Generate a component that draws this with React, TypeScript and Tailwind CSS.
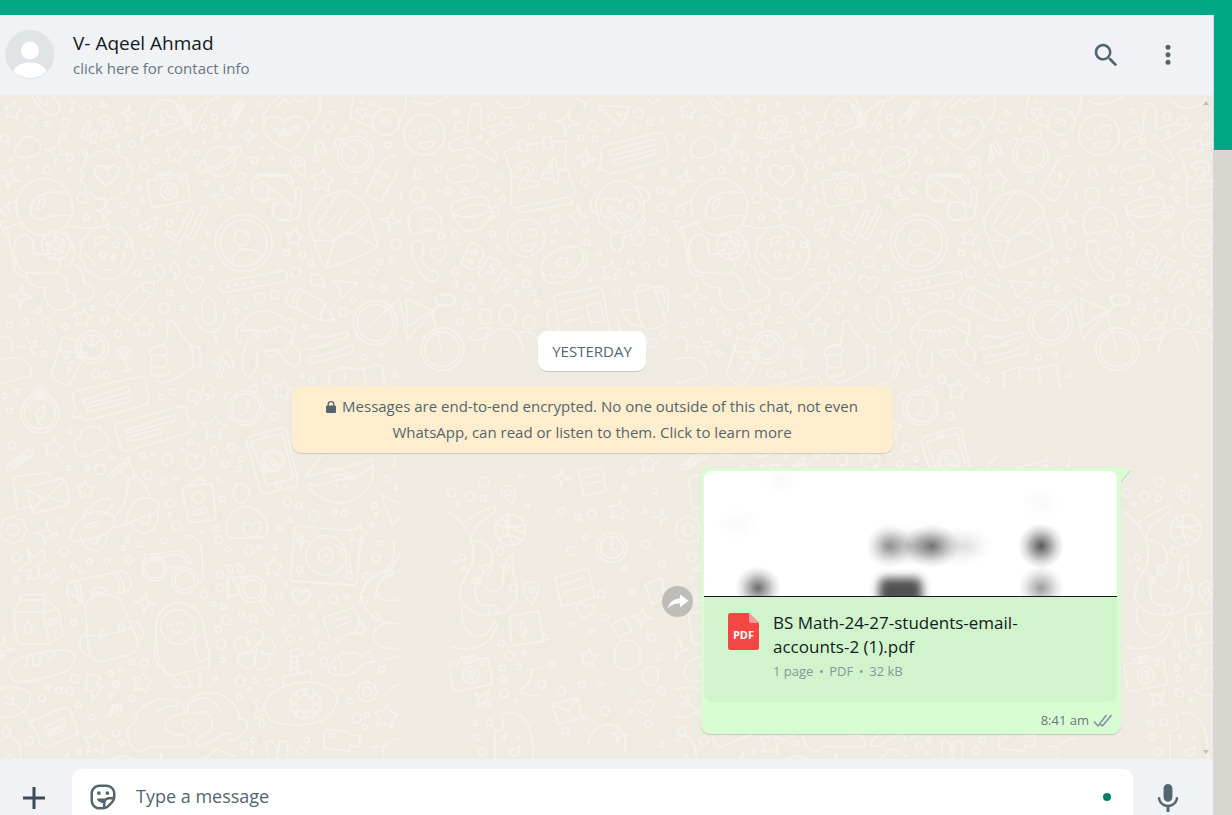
import React from "react";

type Dot = [number, number, number];
type Mark = [number, number, number, number];

const TILE_WIDTH = 2025;
const TILE_HEIGHT = 2100;

const dotsA: Dot[] = [
  [216, 30, 7], [214, 57, 4], [261, 52, 12], [309, 41, 7], [92, 89, 14], [139, 99, 6], [196, 95, 12], [187, 135, 8],
  [14, 143, 12], [385, 116, 8], [395, 160, 10], [354, 167, 5], [255, 189, 7], [209, 200, 10], [29, 203, 6], [83, 233, 6],
  [140, 237, 10], [207, 236, 5], [441, 176, 7], [433, 224, 12], [469, 210, 8], [591, 186, 8], [644, 79, 9], [612, 107, 7],
  [651, 134, 7], [649, 109, 3], [612, 151, 4], [694, 135, 4], [755, 89, 4], [779, 39, 8], [789, 169, 4], [763, 208, 9],
  [813, 201, 7], [723, 257, 12], [618, 276, 7], [713, 298, 8], [417, 290, 6], [427, 329, 6], [245, 321, 14], [373, 341, 8],
  [405, 363, 11], [259, 379, 8], [534, 354, 7], [509, 397, 9], [626, 427, 6], [612, 467, 6], [523, 482, 6], [445, 489, 14],
  [581, 512, 17], [633, 530, 7], [413, 545, 10], [510, 606, 7], [335, 624, 19], [491, 652, 15], [547, 651, 6], [278, 651, 7],
  [115, 658, 7], [317, 686, 10], [75, 693, 10], [28, 701, 8], [139, 694, 13], [156, 724, 10], [195, 707, 8], [353, 729, 10],
  [997, 67, 7], [984, 108, 15], [1035, 112, 6], [1165, 162, 9], [1065, 271, 7], [859, 486, 9], [907, 493, 9], [934, 517, 8],
  [887, 544, 15], [1070, 541, 8], [1119, 541, 12], [1139, 513, 8], [1176, 506, 7], [1187, 460, 15], [1113, 581, 7],
  [1149, 593, 8], [1059, 627, 8], [1030, 663, 13], [916, 709, 7], [694, 631, 9], [738, 649, 6], [707, 660, 8],
  [779, 621, 14], [823, 611, 12],
];

const dotsB: Dot[] = [
  [168, 62, 8], [178, 108, 15], [275, 77, 11], [427, 76, 9], [392, 106, 8], [241, 138, 6], [278, 125, 6], [202, 151, 7],
  [578, 104, 14], [542, 140, 8], [585, 143, 8], [621, 118, 7], [715, 68, 14], [704, 111, 8], [749, 94, 8], [787, 87, 6],
  [206, 199, 7], [115, 233, 10], [113, 296, 6], [144, 301, 10], [252, 282, 8], [299, 256, 8], [290, 295, 6], [309, 325, 8],
  [555, 271, 12], [720, 257, 8], [792, 241, 7], [781, 298, 10], [817, 306, 6], [783, 350, 12], [465, 384, 11], [470, 419, 5],
  [510, 430, 5], [458, 454, 5], [559, 417, 8], [562, 454, 9], [278, 429, 9], [295, 466, 6], [124, 436, 9], [166, 430, 9],
  [174, 458, 6], [762, 421, 10], [801, 443, 7], [597, 487, 7], [693, 512, 8], [738, 525, 11], [789, 510, 14], [699, 549, 6],
  [569, 565, 6], [359, 525, 7], [382, 541, 9], [379, 579, 12], [350, 606, 7], [401, 605, 7], [413, 637, 8], [242, 627, 7],
  [198, 648, 10], [181, 692, 10], [166, 577, 8], [165, 542, 10], [209, 589, 13], [650, 606, 10], [790, 729, 10], [755, 756, 14],
];

const dotsC: Dot[] = [
  [133, 38, 8], [287, 98, 12], [320, 101, 10], [14, 166, 8], [53, 151, 7], [28, 208, 8], [210, 270, 7], [35, 312, 10],
  [336, 348, 6], [209, 380, 7], [262, 381, 7], [300, 385, 16], [443, 402, 13], [428, 344, 8], [460, 341, 4], [502, 356, 16],
  [545, 327, 6], [571, 303, 8], [598, 312, 3], [642, 329, 11], [695, 320, 12], [676, 369, 10], [715, 385, 7], [723, 354, 7],
  [485, 169, 7], [519, 154, 10], [527, 411, 7], [490, 423, 7], [656, 412, 6], [666, 474, 7], [510, 487, 12], [509, 520, 5],
  [530, 555, 14], [607, 573, 5], [646, 563, 8], [657, 596, 11], [181, 537, 8], [192, 631, 14], [383, 596, 7], [418, 611, 8],
  [491, 599, 9], [369, 622, 7], [386, 656, 11], [321, 659, 8], [268, 662, 8], [244, 691, 6], [220, 676, 7], [50, 649, 13],
  [48, 715, 7], [683, 625, 8], [747, 630, 13], [778, 619, 6], [825, 618, 7], [839, 564, 7], [871, 537, 7], [862, 482, 12],
  [897, 494, 9], [942, 526, 15], [1003, 514, 8], [1033, 517, 9], [1122, 494, 8], [1129, 521, 5], [1116, 552, 6],
  [1161, 414, 10], [1187, 440, 5], [1142, 606, 8], [1129, 652, 11], [856, 731, 7], [801, 115, 12], [824, 226, 11],
  [907, 103, 6], [935, 117, 8], [1092, 49, 8], [1142, 41, 7], [1184, 99, 7],
];

const dotsD: Dot[] = [
  [222, 184, 8], [397, 304, 8], [433, 306, 12], [364, 326, 7], [332, 337, 7], [348, 369, 9], [223, 353, 12], [145, 381, 6],
  [176, 388, 9], [209, 390, 11], [127, 412, 10], [235, 432, 8], [332, 404, 7], [397, 411, 9], [277, 468, 8], [348, 516, 10],
  [365, 546, 7], [87, 539, 12], [237, 574, 7], [612, 102, 10], [641, 129, 7], [671, 136, 8], [679, 177, 14], [725, 159, 7],
  [760, 173, 10], [655, 205, 9], [663, 250, 14], [668, 298, 7], [646, 353, 6], [721, 360, 15], [762, 359, 8], [810, 364, 12],
  [750, 386, 6], [718, 410, 8], [837, 108, 10], [882, 176, 14], [932, 165, 7], [853, 206, 7], [870, 234, 11], [904, 233, 3],
  [947, 207, 7], [968, 255, 12], [935, 279, 7], [971, 300, 10], [961, 129, 7], [998, 115, 14], [1042, 107, 7],
  [1145, 325, 9], [1026, 386, 6], [1050, 419, 8], [1070, 471, 14], [1101, 461, 7], [1094, 497, 7], [921, 536, 8],
  [903, 570, 11], [760, 537, 8], [733, 556, 9], [757, 573, 5],
];

const dotsE: Dot[] = [
  [658, 63, 14], [614, 106, 14], [560, 95, 12], [655, 112, 9], [581, 128, 6], [705, 270, 12], [767, 44, 6], [788, 135, 6],
  [709, 547, 9], [776, 575, 6], [732, 584, 13], [711, 620, 8], [762, 617, 7], [716, 653, 8], [718, 696, 12], [752, 719, 5],
  [630, 785, 7], [673, 785, 10], [636, 829, 10], [653, 872, 11], [592, 290, 9], [572, 303, 5], [597, 321, 5],
];

const dotsF: Dot[] = [
  [350, 180, 10], [380, 300, 14], [420, 260, 7], [470, 430, 12], [540, 350, 8], [600, 280, 12], [630, 120, 8],
  [410, 700, 9], [480, 780, 13], [560, 720, 8], [610, 820, 11], [640, 620, 7], [300, 560, 8], [360, 840, 10],
  [560, 60, 10], [540, 110, 7], [600, 180, 6], [400, 200, 8], [440, 190, 12], [650, 340, 10], [560, 420, 7],
  [480, 500, 10], [440, 540, 6], [620, 560, 12], [380, 520, 7], [350, 720, 12], [560, 780, 6], [650, 720, 12],
  [420, 800, 7], [650, 880, 8], [320, 640, 9], [470, 700, 6], [290, 700, 12],
];

function starPath(points: number, radius: number, inner: number) {
  const out: string[] = [];
  for (let i = 0; i < points * 2; i++) {
    const r = i % 2 === 0 ? radius : radius * inner;
    const a = (Math.PI * i) / points - Math.PI / 2;
    out.push(`${(r * Math.cos(a)).toFixed(1)} ${(r * Math.sin(a)).toFixed(1)}`);
  }
  return `M${out.join("L")}Z`;
}

function Dots({ items }: { items: Dot[] }) {
  return (
    <>
      {items.map(([x, y, r]) => (
        <circle key={`${x}-${y}`} cx={x} cy={y} r={r} />
      ))}
    </>
  );
}

function Stars({ items }: { items: Mark[] }) {
  return (
    <>
      {items.map(([x, y, r, a]) => (
        <path key={`${x}-${y}`} d={starPath(5, r, 0.52)} transform={`translate(${x} ${y}) rotate(${a})`} />
      ))}
    </>
  );
}

function Sparkles({ items }: { items: Mark[] }) {
  return (
    <>
      {items.map(([x, y, r, a]) => (
        <path key={`${x}-${y}`} d={starPath(4, r, 0.3)} transform={`translate(${x} ${y}) rotate(${a})`} />
      ))}
    </>
  );
}

const HEART = "M0 26C-22 10-30 0-29-11C-27-25-8-28 0-13C8-28 27-25 29-11C30 0 22 10 0 26Z";

function Hearts({ items }: { items: Mark[] }) {
  return (
    <>
      {items.map(([x, y, s, a]) => (
        <path key={`${x}-${y}`} d={HEART} transform={`translate(${x} ${y}) rotate(${a}) scale(${s})`} />
      ))}
    </>
  );
}

function HeartEyes({ x, y, r }: { x: number; y: number; r: number }) {
  return (
    <g transform={`translate(${x} ${y}) scale(${r / 60})`}>
      <circle r="60" />
      <path d={HEART} transform="translate(-28 -2) rotate(-8) scale(.62)" />
      <path d={HEART} transform="translate(20 -14) rotate(-8) scale(.62)" />
      <path d="M-18 24Q6 26 30 17Q28 38 8 42Q-14 42-18 24Z" />
    </g>
  );
}

function Camera({ x, y }: { x: number; y: number }) {
  return (
    <g transform={`translate(${x} ${y}) rotate(-11)`}>
      <path d="M-56-40h28l8-14h38l8 14h28q6 0 6 8v64q0 10-8 10h-100q-12 0-12-10v-62q0-10 4-10z" />
      <circle r="25" cy="2" /><circle r="12" cy="2" /><circle r="3" cy="2" />
      <rect x="-14" y="-46" width="28" height="11" rx="5" /><circle cx="42" cy="-26" r="7" />
    </g>
  );
}

function DoodleBackground() {
  return (
    <svg className="absolute inset-0 h-full w-full" aria-hidden="true">
      <defs>
        <pattern id="doodles" width={TILE_WIDTH / 3} height={TILE_HEIGHT / 3} patternUnits="userSpaceOnUse">
          <g transform="scale(.33333)" fill="none" stroke="#f5f2eb" strokeWidth="5.500" strokeLinejoin="round" strokeLinecap="round">
            <g transform="translate(0 -15)">
              <Dots items={dotsA} />
              <Stars items={[[39, 60, 28, 8], [527, 188, 34, 10], [967, 270, 36, 6], [883, 440, 27, 10], [248, 681, 30, 8], [432, 711, 32, 0]]} />
              <Sparkles items={[[385, 68, 23, 6], [746, 135, 26, 0], [171, 181, 37, 10], [28, 263, 31, 14], [664, 318, 37, 8], [314, 361, 25, 6], [63, 617, 36, 5], [1172, 388, 31, 8]]} />
              <Hearts items={[[320, 252, 1.25, 0], [579, 579, 1, 8]]} />
              <path d="M96 15Q105 40 144 70Q166 78 178 60Q184 38 157 15M110 18L134 42Q146 44 142 30" />
              <path d="M48 192Q38 168 60 156Q66 134 88 138Q100 136 108 146Q130 154 120 180Q114 196 92 196Q66 208 48 192Z" />
              <path d="M260 92L242 138L276 144L272 154L286 156L291 126L278 124L276 134L258 130L274 96ZM295 88Q304 68 326 76Q346 86 334 108L318 124L350 124L352 134L302 146Q298 130 318 112Q328 98 324 90Q314 84 308 96Z" />
              <path d="M420 96L446 92Q452 40 486 25L525 32Q560 60 556 104L520 118Q490 138 470 132L474 118Q440 120 424 152Q424 130 436 106ZM482 62Q502 50 500 74L530 84Q536 98 512 100L486 102Q476 98 492 86L480 76ZM525 32L556 104L566 100Q560 56 538 18" />
              <path d="M572 66L620 30Q634 30 624 42L584 122Q572 128 572 112ZM632 28L655 17" />
              <path d="M674 92L704 46M690 104Q670 108 674 88M694 104L738 38M704 46Q716 24 734 30M700 84L730 36M694 76L722 32" />
              <path d="M790 100Q794 76 824 76Q846 78 854 98Q866 74 900 76Q926 84 924 116Q914 150 868 180Q812 156 790 120ZM790 86Q796 46 826 28L840 16M830 48Q846 30 858 24L862 40L886 22L894 34L924 18M958 18Q970 68 928 108M820 112L834 112L840 132L852 114L862 132L878 110L892 104L896 112L866 136L852 126L840 140Z" />
              <path d="M1062 18Q1050 60 1054 82L1120 110M1072 52L1086 58L1098 50L1096 66L1110 74L1092 76L1086 86L1080 70L1070 66ZM1080 30L1090 36M1108 36L1120 42M1134 42L1150 56" />
              <circle cx="1158" cy="92" r="40" /><path d="M1144 82L1174 92M1144 92L1170 102" />
              <circle cx="1066" cy="190" r="53" /><circle cx="1066" cy="190" r="42" /><path d="M1056 168L1068 188L1056 210M1076 130Q1080 116 1098 122Q1104 132 1094 140M1006 166Q1000 146 1018 142Q1028 142 1028 148" />
              <path d="M944 160L964 148L980 188Q974 196 966 188L956 164L948 166L956 204Q948 216 940 206L946 198Z" />
              <path d="M914 258Q874 228 872 214Q876 196 894 198Q914 200 914 220Z" /><circle cx="893" cy="218" r="9" />
              <path d="M1098 300L1148 212Q1160 192 1186 196M1098 300Q1116 330 1144 330L1196 238M1128 234Q1150 254 1170 260M1118 266Q1136 284 1158 288M1150 250L1160 248L1154 264Z" />
              <path d={starPath(14, 80, 0.88)} transform="translate(320 252)" />
              <circle cx="661" cy="212" r="45" /><path d="M614 206Q590 222 592 238Q598 250 626 242Q690 224 722 188Q726 166 708 166Q686 170 688 178Q704 172 708 184Q670 222 606 238" />
              <Camera x={506} y={298} />
              <path d="M762 260Q748 290 758 310Q770 332 798 334Q808 320 824 326Q808 372 828 380Q850 398 894 380L900 364Q906 330 904 296Q898 284 886 294Q890 330 886 350L830 304L762 254L860 258Q860 278 878 280Q886 270 866 252L778 250" />
              <circle cx="784" cy="302" r="26" /><circle cx="846" cy="360" r="28" />
              <path d="M416 406L470 378Q474 376 472 384L452 438L436 424L452 404L426 420Z" />
              <path d="M494 430L540 458L582 364Q578 354 568 360L532 434L502 418ZM556 436L578 448L622 356Q622 346 610 348L570 430Z" />
              <circle cx="731" cy="456" r="85" /><circle cx="731" cy="456" r="70" /><circle cx="725" cy="441" r="23" /><path d="M696 506Q706 474 736 474Q776 476 788 494" />
              <path d="M928 380L970 318Q996 304 1030 298Q1070 310 1102 350L1134 462Q1120 486 978 532Q950 486 940 440Q922 404 928 380ZM940 448L1004 450L1102 372M948 410L1000 330Q1008 306 1026 304M948 410L1004 446L1030 428L1060 426L1134 470M1004 446L978 530M1066 426L1106 382M988 396L1006 376M1006 408L1046 352" />
              <circle cx="133" cy="348" r="85" /><path d="M96 378Q82 346 112 320Q144 296 200 304M96 378Q120 392 148 378Q180 368 214 376M112 352Q114 326 136 320Q140 334 120 356Z" />
              <path d="M48 330Q8 336-4 374Q-2 410 22 436M20 344L28 360M4 366L20 374M0 394L18 392M8 418L20 408M22 408L70 392M22 408L44 538Q54 560 78 554M72 430Q38 440 42 480Q52 542 78 544L160 548Q188 532 178 512Q170 506 160 500L170 488L102 490Q102 432 72 430ZM196 402L256 412L310 406M192 420Q230 470 222 500L206 526M78 548Q84 592 134 590Q130 644 172 658Q230 652 224 622Q216 596 190 600M170 544Q208 560 204 604M222 520Q248 530 254 578Q290 586 280 616Q270 630 228 632" />
              <circle cx="167" cy="463" r="42" /><circle cx="167" cy="463" r="13" />
              <Dots items={[[167, 439, 4], [189, 448, 4], [191, 463, 4], [186, 482, 4], [144, 478, 4], [144, 460, 4]]} />
              <path d={starPath(11, 84, 0.93)} transform="translate(322 484)" />
              <path d="M286 446Q300 432 322 440Q310 452 286 464ZM254 486Q270 500 286 522M320 410L340 428M366 486Q382 494 362 516M310 538L334 536M336 496L346 490L342 510Z" /><Dots items={[[348, 461, 9], [308, 493, 9], [386, 462, 8]]} />
              <path d="M462 540Q458 520 478 520Q496 528 494 546Q490 566 474 570Q482 556 480 548Q466 552 462 540ZM510 534Q510 514 528 516Q542 528 538 546Q532 562 520 566Q528 550 524 544Q510 546 510 534Z" />
              <path d="M350 652L424 578L462 572L462 604L384 688Q360 684 350 652ZM424 578Q426 602 456 608M364 640Q372 664 396 674" />
              <path d="M664 574L846 540Q864 544 862 560Q860 572 842 574L680 604Q656 602 656 588Q656 578 664 574Z" /><Dots items={[[683, 586, 4], [708, 580, 4], [733, 577, 4], [758, 573, 4]]} />
              <path d="M932 572Q926 548 948 548Q970 554 974 590Q958 576 940 584ZM1000 568L1074 576L1028 618Q1020 618 1022 598Z" />
              <path d="M864 614Q872 586 896 592L964 628L1004 686L960 688L884 650Q852 640 856 626ZM896 596Q876 612 880 636M908 600Q886 624 892 650M976 640Q960 660 962 684" />
              <path d="M606 640Q610 616 628 618Q642 622 646 644L650 676Q648 698 630 700Q610 696 606 676ZM588 680Q594 720 634 724Q676 714 672 666M640 724L650 756" />
              <path d="M732 690Q752 660 796 658Q836 660 854 690Q888 672 884 720L878 738Q880 766 856 778M732 694Q706 706 708 740Q716 756 722 760M732 694Q720 730 740 716L792 722L840 706L878 730M758 740L768 716M770 742L778 722M800 736L796 718M814 732L808 716M832 726L820 712" />
              <circle cx="1126" cy="695" r="66" /><circle cx="1126" cy="695" r="54" /><path d="M1124 692L1200 620" />
              <path d="M916 754Q928 726 956 738L980 740L1040 722Q1048 730 1040 738L988 756L966 770M452 776Q470 760 494 762Q506 726 504 696Q516 682 526 700Q540 732 572 760L600 772M180 778L186 738L240 752" />
              <circle cx="277" cy="768" r="48" /><circle cx="277" cy="768" r="36" /><path d="M277 768L277 736M277 768L250 744M277 768L304 744" />
              <path d="M0 740Q34 728 38 760L34 780M78 736L86 756L108 750L110 764L90 770L102 790M54 766L74 768" />
            </g>

            <g transform="translate(1200 -15)">
              <Dots items={dotsB} />
              <Stars items={[[632, 542, 31, 8]]} />
              <Sparkles items={[[501, 95, 38, 8], [556, 203, 32, 8], [532, 377, 34, 4]]} />
              <Hearts items={[[86, 400, 0.75, -6], [117, 491, 0.85, -10]]} />
              <HeartEyes x={73} y={131} r={61} /><HeartEyes x={378} y={441} r={56} />
              <path d="M0 90Q20 50 18 16M40 30Q84 54 142 18M292 30Q306 56 350 50Q390 42 390 20M532 24L556 34L552 52L574 22M742 24Q758 50 776 20" />
              <path d="M218 38Q240 36 244 60L244 116L306 96Q308 76 330 78Q338 88 332 100Q350 96 348 106L256 152L290 190Q298 210 286 212L210 170Q156 186 148 174Q142 154 172 142L202 134Q206 60 218 38ZM304 100L330 104" />
              <path d="M138 250Q140 230 168 232Q184 216 208 226Q232 220 236 246Q230 266 204 268L158 278Q140 270 138 250ZM44 228Q68 240 66 256Q56 270 42 256ZM196 286Q212 304 204 312Q192 314 190 300Z" />
              <path d="M312 182L350 170M384 162L426 154M460 152L498 152L496 220Q512 272 526 298Q522 316 510 318L518 336L362 366L348 350L510 318M350 350L334 346L334 250Q324 210 312 182M354 150L376 146L384 178L360 184ZM428 140L452 136L458 168L434 176ZM334 262L352 258M478 240L498 234M350 228Q362 206 388 212Q414 222 394 248L376 272L414 270L416 284L356 296Q354 274 386 244Q390 232 380 228Q368 226 364 238ZM446 212L424 262L462 264L462 278L474 276L476 256L466 204L456 206L456 246L438 248L454 216Z" />
              <path d="M598 50Q596 42 608 44L688 48L666 102Q660 110 652 100ZM646 62L682 76L672 88Z" />
              <path d="M602 182Q604 168 616 162L780 124Q792 124 794 134L806 190Q804 204 792 208L626 250L612 236L594 238L606 212ZM628 180L760 146Q774 148 766 160L636 194Q624 190 628 180ZM638 208L764 176Q774 182 764 190L648 220Q634 216 638 208Z" />
              <path d="M32 316Q32 290 52 290Q74 296 74 320Q68 336 54 336Q34 332 32 316ZM26 410Q18 366 54 350Q98 342 122 380Q132 412 118 418Q74 420 36 430ZM0 300Q12 316 0 326" />
              <path d="M152 350Q156 332 188 326Q250 308 262 324Q276 350 252 368Q206 386 166 372Q150 364 152 350ZM166 364Q210 334 254 342M156 372L190 416Q218 426 248 408L268 378M264 352L290 346Q300 356 294 372L262 388M268 366Q284 354 282 372L266 378" />
              <ellipse cx="660" cy="348" rx="72" ry="78" /><circle cx="632" cy="354" r="8" /><circle cx="692" cy="346" r="8" />
              <path d="M606 368Q592 330 622 324Q650 318 660 334Q680 304 710 320Q730 340 716 364L690 380M606 368Q620 388 636 380Q644 366 662 364L716 402M590 306Q564 322 574 354Q582 368 592 362M710 286Q746 292 748 320Q744 334 730 332M650 378L668 404M662 372L684 396M618 392L636 432Q620 462 650 482Q676 472 668 440L692 430Q700 470 722 464Q744 440 716 422L738 380" />
              <path d="M34 458Q54 440 68 454L72 484L60 502L92 538L112 544Q122 562 104 570Q78 572 60 544Q30 500 34 458Z" />
              <path d="M214 454L182 516L210 534Q244 538 238 510Q262 488 240 466ZM216 478Q234 478 228 490L212 488ZM204 504Q220 508 214 520L200 512ZM266 496L234 550L250 562L262 540L276 546L282 534L270 528L276 518L294 528L302 514ZM310 536L276 594L292 606L304 584L320 590L326 578L312 570L318 560L338 570L346 554Z" />
              <path d="M424 534Q424 510 446 492Q490 462 530 468Q570 486 562 512Q548 548 498 570Q456 584 440 570Q426 556 424 534ZM424 534Q432 566 452 548Q464 566 476 548Q492 572 504 548Q530 548 540 520Q556 510 546 482M470 518Q476 498 500 500Q508 512 490 524Q474 532 470 518Z" />
              <path d="M462 624Q456 618 470 612L598 588Q608 590 610 604L630 730M462 624L478 720M458 654Q436 664 442 684L452 722M474 634L596 608M484 664L542 652M492 692L550 680M558 644L600 632L612 690L574 696ZM652 684Q664 706 656 720" />
              <path d="M702 604L722 582L744 580L760 590L800 690Q804 704 742 716L724 702L702 604L760 590M760 590Q790 574 806 610L804 664M770 604Q794 584 794 640M722 660L664 656Q680 706 728 706" />
              <path d="M0 562L42 578L20 600L0 580M18 622L98 658L24 708ZM0 630L22 740M104 620L120 612Q166 606 166 634Q150 646 120 640L96 668L126 776M22 744L96 664M118 646L104 618" />
              <circle cx="127" cy="775" r="64" /><circle cx="127" cy="775" r="52" />
              <ellipse cx="257" cy="678" rx="18" ry="22" /><ellipse cx="322" cy="672" rx="25" ry="30" /><ellipse cx="386" cy="694" rx="18" ry="21" />
              <path d="M208 748Q220 706 272 710L252 744ZM252 780Q256 716 310 712Q360 712 370 780M360 724Q406 720 416 750" />
            </g>

            <g transform="translate(0 735)">
              <Dots items={dotsC} />
              <Stars items={[[159, 322, 30, 10], [643, 262, 38, 6], [847, 148, 32, 10], [256, 447, 29, 0], [1074, 580, 30, 10], [820, 680, 29, 5]]} />
              <Sparkles items={[[138, 577, 36, 5], [158, 706, 26, 8], [904, 600, 20, 0]]} />
              <Hearts items={[[585, 364, 1, 10], [757, 567, 1, -6], [903, 765, 0.9, 5]]} />
              <path d="M180 10L154 104Q176 130 206 134Q224 110 250 48M178 32L262 34M-4 60Q40 40 74 60Q96 76 96 104L0 128" />
              <Dots items={[[200, 48, 5], [237, 47, 5], [218, 66, 5], [207, 84, 5], [371, 36, 19], [371, 36, 9]]} />
              <path d="M376 56L384 90M370 92L396 84M448 36Q452 14 480 14L500 18Q512 40 488 42L464 42Q446 50 448 36ZM458 44Q444 80 470 80L494 78Q508 60 492 44M454 84Q448 104 470 106Q510 108 506 88M470 108Q472 128 494 124Q542 110 576 82M572 14Q586 50 578 78L600 76Q602 50 598 18M636 66L684 30L702 76Q694 86 686 76L676 60L664 106Q650 110 654 98L668 52L646 74Z" />
              <path d="M728 40L744 0M728 40Q722 96 746 108Q776 96 770 30M834 26Q848 62 884 76Q908 70 898 30L868 0M792 30Q796 50 820 46Q834 38 828 26Z" />
              <path d="M924 60Q930 40 960 44L1024 26L1040 14Q1060 12 1058 26Q1050 44 1030 42L934 68ZM916 20Q930 30 950 18L1000 10M990 102Q976 96 990 92L1030 78L1070 86L1138 72Q1146 72 1146 84L1158 140M990 102L984 140M1032 82L1036 118M1092 84L1096 128" />
              <circle cx="120" cy="218" r="57" /><circle cx="120" cy="218" r="46" /><circle cx="121" cy="151" r="17" /><circle cx="121" cy="151" r="7" /><path d="M108 214L132 192L134 220L114 246ZM84 200L92 206M122 262L124 252M164 220L154 218" />
              <path d="M218 172Q216 156 230 150L420 106Q434 106 438 120L448 176Q444 190 430 194L258 240L242 226L214 232L226 206ZM248 178L380 136Q398 140 388 152L266 188Q244 190 248 178ZM262 200L386 168Q396 174 384 184L278 210Q256 210 262 200Z" />
              <path d="M344 264Q342 252 358 246L540 196Q556 194 560 208L566 238L586 250L568 262L572 274L384 328Q366 330 362 318ZM376 268L520 222Q536 228 524 238L388 274Q370 278 376 268ZM382 290L480 262Q492 266 482 278L398 300Q382 300 382 290Z" />
              <path d="M226 330Q216 298 242 288Q242 256 274 258Q298 250 306 272Q330 280 326 304Q316 330 288 328Q276 352 246 346Z" />
              <path d="M566 172Q558 150 580 148Q602 154 602 172Q598 186 586 194Q592 182 586 178Q572 184 566 172ZM606 150Q604 128 624 128Q646 136 642 156Q634 174 622 176Q630 164 624 160Q608 162 606 150Z" />
              <circle cx="737" cy="200" r="52" /><circle cx="737" cy="200" r="42" /><path d="M736 172L746 190L738 214L722 222M750 142Q754 130 772 134Q776 144 766 150M674 176Q668 156 690 154" />
              <path d="M740 306Q738 292 752 286L844 260Q856 260 860 272L894 420Q892 434 882 438L796 458Q784 458 780 444ZM754 302L848 278L880 412L800 432ZM786 286L806 282" />
              <circle cx="820" cy="360" r="33" /><circle cx="820" cy="360" r="25" /><path d="M808 346Q806 372 832 374L834 364L822 362L816 350ZM792 386L790 394L804 390" /><circle cx="836" cy="432" r="8" />
              <path d="M20 374L84 326Q100 326 96 344L36 388Q20 390 20 374ZM28 376L80 342M38 380L84 348" />
              <path d="M52 506L40 416Q40 408 50 406L142 394Q150 396 152 412M80 446Q78 438 88 436L184 412Q196 414 198 424L208 478Q204 490 196 494L110 516Q98 516 96 506ZM82 446L136 476L192 420M98 508L130 472M148 470L206 486M52 506L94 496" />
              <path d="M324 406L386 348Q394 356 382 370L332 412ZM366 376Q384 356 400 384Q408 410 390 418L362 392ZM384 418Q388 490 340 528M400 398Q434 420 452 470M250 522Q296 466 330 472Q350 490 310 524M210 580Q230 530 280 512Q346 510 344 544Q336 574 296 588L230 602Q206 602 210 580ZM254 554L294 542Q302 548 290 554L262 562ZM376 552Q384 490 424 470Q474 470 478 494Q474 518 450 520Q394 540 376 552L338 560" />
              <path d="M242 588Q254 634 296 628Q322 612 320 580M258 596Q270 612 286 606Q298 602 298 590M394 546Q408 580 440 576Q478 566 474 516M418 532Q424 552 440 550Q452 540 448 524" />
              <path d="M548 448Q546 440 558 436L630 428Q636 430 638 440L648 524Q646 534 636 536L576 546Q566 544 564 536ZM552 440L600 412L614 420L616 430M582 510L616 500Q626 504 618 514L590 522Q580 520 582 510Z" /><circle cx="594" cy="470" r="18" />
              <path d="M700 456Q704 426 722 426Q748 432 748 460Q740 486 722 488Q704 484 700 456ZM680 580Q674 516 722 500Q776 490 802 548Q806 578 790 588L688 592Z" />
              <path d="M916 408L966 342M916 408L1116 358L1116 342M928 428Q960 440 1000 420L1060 408Q1098 398 1118 370Q1124 400 1110 430Q1080 484 1010 486Q940 468 928 440ZM984 382Q1020 378 1054 402M994 410L1020 400L1068 418M1006 428L1012 440M1036 430L1040 440M1180 380L1186 344" />
              <path d={starPath(8, 43, 0.83)} transform="translate(39 567)" /><circle cx="39" cy="567" r="17" />
              <path d="M84 626L100 652L130 624L138 660L112 672L118 708L84 716L94 688L56 688L90 660Z" />
              <path d="M554 586Q566 576 586 592Q610 612 606 640L608 718Q600 730 590 720M434 640Q480 640 530 628Q556 628 574 662Q574 670 564 666Q546 638 528 640L448 658Q424 664 428 686L434 640M500 676Q512 672 524 682" />
              <circle cx="464" cy="684" r="36" /><circle cx="464" cy="684" r="28" /><circle cx="554" cy="718" r="39" /><circle cx="554" cy="718" r="29" />
              <path d="M650 694Q664 686 672 704Q670 716 658 712Q646 704 650 694ZM678 674Q692 664 698 684Q700 700 688 696ZM708 670Q726 668 732 690Q722 702 712 690ZM648 740Q650 724 664 730Q676 744 668 752Q652 756 648 740ZM680 722Q686 706 704 710L736 706M680 722L686 776" />
              <circle cx="757" cy="745" r="40" /><circle cx="757" cy="745" r="28" />
              <path d="M884 560Q886 556 898 556L1048 568M1082 594L1070 724Q1066 734 1056 732L878 720Q870 716 872 706L884 560M1008 614L1048 640L1054 700M1016 632L1040 648L1040 700" /><circle cx="978" cy="643" r="60" /><circle cx="978" cy="643" r="22" /><circle cx="978" cy="643" r="5" /><circle cx="1047" cy="705" r="10" /><circle cx="898" cy="685" r="9" />
              <path d="M1180 600Q1190 660 1150 690Q1080 730 1082 780M1200 636Q1186 670 1150 708Q1124 740 1128 780M1144 462L1200 488M1144 462L1176 552L1200 530" />
            </g>

            <g transform="translate(0 1395)">
              <Dots items={dotsD} />
              <Stars items={[[426, 366, 32, 10], [288, 545, 39, 6], [1158, 467, 38, 8]]} />
              <Sparkles items={[[435, 125, 32, 6], [10, 262, 32, 8], [484, 600, 22, 0]]} />
              <Hearts items={[[570, 496, 0.7, 0], [903, 110, 0.95, 4]]} />
              <path d="M200 84Q198 68 212 62L366 30Q386 34 394 66Q390 90 374 92L352 98M250 128L222 138Q206 130 200 84ZM224 64L240 130M234 60L250 124M340 38Q360 60 362 96M350 34Q370 58 374 92" />
              <path d="M40 154L64 104Q66 98 134 100L136 116L174 144L190 222L148 250L62 248Q52 246 50 232ZM40 154L130 154L174 144M130 154L148 250M130 154L136 116M60 118L136 116M84 180Q100 204 96 214Q86 224 76 210Q72 200 84 180ZM144 186Q148 172 170 172Q172 184 148 192Z" />
              <path d="M256 138Q262 106 300 102Q348 100 362 120L410 230Q424 268 384 282L310 300Q276 306 264 258ZM256 220Q306 236 408 194M276 100Q278 74 298 78Q322 82 322 100M286 102Q296 82 310 100M260 222Q238 216 240 250Q246 282 266 284M396 182Q418 176 430 214Q426 240 414 240M298 208L312 206L314 226L300 230ZM354 192L368 190L372 210L358 214Z" />
              <path d="M28 330Q32 294 86 284Q200 252 222 280Q232 306 196 332Q100 364 50 362Q26 352 28 330ZM74 318L86 282L98 280L100 312L118 312L122 276L132 276L148 290M148 306L160 274Q170 266 164 284" />
              <path d="M264 338L300 346L290 372L308 378L278 420L276 392L256 386ZM0 384Q60 370 90 396Q94 440 68 454L84 466M66 452Q26 480 0 464M18 402L62 446M14 426L44 430M38 400L40 422" />
              <path d="M84 484L188 440Q206 438 212 450L236 518L134 560L118 546L110 510ZM132 500L186 474Q198 478 190 488L144 510ZM140 520L190 496Q198 500 188 508L152 524Z" />
              <path d="M338 432L368 434L358 462Q346 470 346 458L354 442L338 440L334 462Q324 472 316 462L328 456Z" />
              <path d="M476 290Q460 200 474 168Q494 124 538 126Q590 130 606 174L630 290L624 320L512 344Q486 330 476 290ZM598 224Q580 226 582 248L598 302L628 290M474 244Q456 250 466 296L484 322L494 318M522 348L540 372L524 378L600 376L600 336M560 340L572 374" />
              <circle cx="533" cy="198" r="51" /><path d="M500 192Q510 186 518 196M532 190Q542 180 550 190M514 208Q528 222 542 210" />
              <path d="M444 556Q426 586 398 560Q380 540 382 504Q400 492 406 480Q412 430 480 414Q560 416 554 456Q496 468 496 494Q500 524 556 524Q580 540 566 556Q500 560 452 556M472 454Q496 430 536 434M562 456Q560 410 604 398Q650 386 686 416Q720 440 718 474Q744 474 742 500Q720 540 688 538Q690 510 672 518L612 554Q586 560 586 544Q600 524 634 510Q644 480 622 458Q606 444 580 460M576 424Q616 390 660 444" />
              {[0, 72, 144, 216, 288].map((a) => (
                <path key={a} d="M-14-12Q-36-50-8-60Q14-66 26-52Q30-36 12-14" transform={`translate(763 267) rotate(${a})`} />
              ))}
              <circle cx="763" cy="267" r="8" />
              <path d="M782 118Q784 130 810 164Q824 168 822 154L794 120ZM700 56L720 96Q700 110 682 100L686 46" />
              <path d="M790 436Q812 384 884 366Q976 354 1012 400Q1016 446 966 480Q880 506 808 476ZM850 376L848 348L926 332Q936 336 934 362M872 344L872 270Q886 258 906 266L908 284L892 286L894 336M874 288L890 284M874 306L892 302M874 324L892 320M790 450Q762 446 764 466Q776 478 790 462M774 416Q758 424 776 446M784 472Q770 494 788 502Q798 480 784 472" />
              <circle cx="916" cy="428" r="45" /><circle cx="916" cy="428" r="26" /><Dots items={[[916, 392, 4], [942, 402, 4], [952, 428, 4], [942, 454, 4], [916, 464, 4], [890, 454, 4], [880, 428, 4], [890, 402, 4]]} />
              <path d="M972 180Q968 170 980 166L1056 142Q1066 140 1070 150L1080 190M972 180L988 232L1006 232L1014 246L1040 222L1058 216M1004 178L1048 166M1008 198L1052 180M1076 190L1086 186L1090 200L1102 204L1086 216L1062 218L1070 206Z" />
              <path d="M986 330Q1000 286 1034 276Q1070 270 1088 288L1108 268L1112 292L1124 302L1092 306Q1070 340 1030 344Q996 344 986 330ZM1016 290Q1032 310 1024 340M1030 276L1024 268" /><Dots items={[[1005, 322, 4]]} />
              <path d={starPath(8, 32, 0.82)} transform="translate(1101 392)" /><circle cx="1101" cy="392" r="14" />
              <path d="M974 514Q976 504 988 506L1044 512Q1054 514 1052 526L1080 522L1078 560L1050 552L1048 570L980 564Q970 560 972 550Z" /><circle cx="995" cy="524" r="7" />
              <path d="M804 600L800 556Q800 536 816 540Q834 552 832 596M832 596L838 548Q846 536 860 544Q868 560 858 600M606 600L650 564L700 586M4 540Q36 500 60 560L64 600M20 600Q28 560 44 600M186 600L206 572L200 600M330 600Q370 570 404 600" /><circle cx="20" cy="512" r="12" />
              <path d="M1180 0Q1190 20 1142 36Q1080 60 1084 110Q1100 170 1160 186Q1200 190 1200 186M1200 30Q1140 48 1128 90Q1140 130 1200 116M1120 230Q1120 196 1160 186M1120 230Q1140 270 1200 262M1160 296Q1170 290 1200 286M1170 386Q1180 370 1200 370M1116 560Q1130 550 1150 560Q1160 540 1200 532M1150 560L1146 600" />
              <Dots items={[[1100, 48, 12], [1090, 120, 12], [1128, 168, 12], [1168, 36, 10]]} />
            </g>

            <g transform="translate(795 1095)">
              <Dots items={dotsE} />
              <circle cx="737" cy="207" r="46" /><path d="M694 190Q740 210 780 188M700 234Q740 210 770 240M730 162Q720 210 744 252M710 172Q744 210 776 214" />
              <path d="M744 128Q706 104 708 90Q714 72 732 74Q752 80 750 98Z" /><circle cx="729" cy="95" r="8" />
              <path d="M586 190Q620 170 640 156L686 136Q696 140 688 154L640 190Q622 208 616 236Q680 240 684 296Q676 320 650 344Q616 380 638 420Q650 438 668 430M546 150Q610 190 624 260Q630 310 604 340Q570 400 596 430Q640 480 720 452Q780 410 744 340L742 282Q720 290 716 340Q720 380 692 392Q664 390 662 376M592 440Q580 500 630 524Q672 530 684 486Q700 480 696 494Q676 550 630 560Q590 568 560 558" />
              <Dots items={[[666, 326, 14], [636, 360, 10], [684, 446, 14], [744, 380, 10], [722, 320, 8]]} />
              <path d="M800 430Q776 404 776 384Q780 362 800 362Q820 366 822 386ZM734 476Q732 466 746 464L820 450L836 540L752 554Q742 552 740 542ZM768 484L778 482L782 510Q774 520 768 506ZM762 514Q776 534 788 508M776 526L778 534" />
              <circle cx="800" cy="388" r="8" /><Camera x={617} y={640} />
              <path d={starPath(4, 30, 0.35)} transform="translate(653 715) rotate(40)" />
              <path d="M762 690Q800 670 800 626L830 620M762 690Q790 706 830 704M690 896L690 810Q704 810 716 800L710 760Q760 744 786 786Q806 830 804 896M712 826L724 820L716 836M756 832L768 826M734 868Q752 866 764 856Q768 882 750 884Q736 884 734 868Z" />
            </g>

            <g transform="translate(1335 1065)">
              <Dots items={dotsF} />
              <Stars items={[[520, 180, 32, 10], [430, 620, 28, 6], [610, 40, 28, 4]]} />
              <Sparkles items={[[590, 500, 32, 6], [350, 80, 26, 4], [520, 850, 26, 6], [650, 200, 24, 4]]} />
              <Hearts items={[[420, 480, 0.9, 8], [600, 770, 0.9, -8]]} />
              <path d="M400 60L470 46L484 120L416 134ZM416 80L462 70M420 100L466 90M330 380L430 350L450 440L350 466ZM350 400L420 380M356 424L426 404M510 600Q520 560 560 570Q600 590 580 640Q540 670 510 640ZM430 880Q440 820 500 820Q550 840 540 900" />
              <path d="M600 400L650 380L660 440L620 460ZM500 520L540 500L560 540L520 560ZM320 760L400 740L410 800L340 820ZM320 760L370 780L400 740M590 680Q600 640 630 650Q650 670 630 700Q604 710 590 680Z" />
              <circle cx="500" cy="290" r="45" /><circle cx="500" cy="290" r="33" /><path d="M500 266L500 292L516 300" />
            </g>
          </g>
        </pattern>
      </defs>
      <rect width="100%" height="100%" fill="url(#doodles)" />
    </svg>
  );
}

function Header() {
  return (
    <header className="flex h-[81px] shrink-0 items-center justify-between border-b border-[#e9edef] bg-[#f0f2f5] pl-[5px] pr-[30px]">
      <div className="flex items-center gap-[18px]">
        <svg className="size-[50px]" viewBox="0 0 50 50" role="img" aria-label="Contact photo">
          <defs>
            <clipPath id="avatar"><circle cx="25" cy="24" r="24" /></clipPath>
          </defs>
          <circle cx="25" cy="24.500" r="24.500" fill="#dfe5e7" />
          <g fill="#fff" clipPath="url(#avatar)">
            <circle cx="25" cy="20.500" r="9" />
            <path d="M7 44Q11 32.500 25 32.500T43 44L40 52H10Z" />
          </g>
        </svg>
        <div>
          <h1 className="text-[19px] leading-[26px] text-[#111b21]">V- Aqeel Ahmad</h1>
          <p className="text-[15px] leading-[24px] text-[#667781]">click here for contact info</p>
        </div>
      </div>
      <div className="flex gap-8 text-[#54656f]">
        <button type="button" aria-label="Search">
          <svg className="size-[30px]" viewBox="0 0 24 24" fill="currentColor">
            <path d="M15.9 14.3H15l-.3-.3c1-1.1 1.6-2.7 1.6-4.3 0-3.7-3-6.7-6.7-6.7S3 6 3 9.7s3 6.7 6.7 6.7c1.6 0 3.2-.6 4.3-1.6l.3.3v.8l5.1 5.1 1.5-1.5-5-5.2zm-6.2 0c-2.6 0-4.6-2.1-4.6-4.6s2.1-4.6 4.6-4.6 4.6 2.1 4.6 4.6-2 4.6-4.6 4.6z" />
          </svg>
        </button>
        <button type="button" aria-label="Menu">
          <svg className="size-[30px]" viewBox="0 0 24 24" fill="currentColor">
            <circle cx="12" cy="5.800" r="2" /><circle cx="12" cy="11.800" r="2" /><circle cx="12" cy="17.800" r="2" />
          </svg>
        </button>
      </div>
    </header>
  );
}

function Preview() {
  return (
    <svg className="block h-[125px] w-full rounded-t-lg bg-white" viewBox="0 0 413 125" preserveAspectRatio="none" role="img" aria-label="Document preview">
      <defs>
        <radialGradient id="blob">
          <stop offset="0" stopColor="#333" />
          <stop offset=".35" stopColor="#333" stopOpacity=".6" />
          <stop offset=".7" stopColor="#333" stopOpacity=".2" />
          <stop offset="1" stopColor="#333" stopOpacity="0" />
        </radialGradient>
        <filter id="soft" x="-50%" y="-50%" width="200%" height="200%">
          <feGaussianBlur stdDeviation="5" />
        </filter>
      </defs>
      <g fill="url(#blob)">
        <ellipse cx="185" cy="75" rx="23" ry="22" opacity=".52" />
        <ellipse cx="228" cy="75" rx="28" ry="22" opacity=".68" />
        <ellipse cx="206" cy="75" rx="30" ry="20" opacity=".28" />
        <ellipse cx="258" cy="75" rx="32" ry="20" opacity=".16" />
        <ellipse cx="337" cy="75" rx="23" ry="23" opacity=".82" />
        <ellipse cx="54" cy="117" rx="23" ry="22" opacity=".72" />
        <ellipse cx="337" cy="117" rx="23" ry="22" opacity=".48" />
        <ellipse cx="337" cy="32" rx="24" ry="20" opacity=".03" />
        <ellipse cx="33" cy="53" rx="26" ry="20" opacity=".03" />
        <ellipse cx="77" cy="10" rx="22" ry="20" opacity=".03" />
      </g>
      <rect x="175" y="107" width="43" height="28" rx="6" fill="#333" opacity=".85" filter="url(#soft)" />
    </svg>
  );
}

function FileMessage() {
  return (
    <div className="flex items-center justify-end gap-2 pr-[63px]">
      <button type="button" aria-label="Forward" className="flex size-[31px] items-center justify-center rounded-full bg-[#bfbdb8] text-white">
        <svg className="size-[22px]" viewBox="0 0 22 22" fill="currentColor">
          <path d="M13 4.200v4C5.500 9.200 2 13.200.5 18.600c3-3.700 7-5.200 12.500-5.200v4.200l8.500-6.800z" />
        </svg>
      </button>
      <article className="relative w-[420px] rounded-b-[9px] rounded-tl-[9px] bg-[#d9fdd3] pl-[3px] pr-1 pt-[3px] shadow-[0_1px_1px_rgba(11,20,26,0.18)]">
        <svg className="absolute left-full top-0 h-[15px] w-[9px]" viewBox="0 0 9 15" aria-hidden="true">
          <path d="M0 0H7.500Q10 .5 8.500 2.500L0 14Z" fill="#d9fdd3" />
          <path d="M9 2.500L0 14.500" stroke="#c9ccbe" fill="none" />
        </svg>
        <Preview />
        <div className="flex h-[106px] gap-3.5 rounded-b-lg border-t border-[#111b21] bg-[#d1f4cc] pl-6 pt-3.5">
          <svg className="mt-0.5 h-[37px] w-[31px] shrink-0" viewBox="0 0 31 37" role="img" aria-label="PDF file">
            <path d="M2.500 0H21l10 10v24.500Q31 37 28.500 37h-26Q0 37 0 34.500v-32Q0 0 2.500 0Z" fill="#f54646" />
            <path d="M21 0l10 10h-7.500Q21 10 21 7.500Z" fill="#fa9b9b" />
            <text x="15.500" y="26" textAnchor="middle" fill="#fff" fontFamily="Open Sans, sans-serif" fontWeight="700" fontSize="11">PDF</text>
          </svg>
          <div>
            <p className="text-[17px] leading-6 text-[#111b21]">BS Math-24-27-students-email-<br />accounts-2 (1).pdf</p>
            <p className="text-[13px] leading-6 text-[#8696a0]">1 page&thinsp; •&thinsp; PDF&thinsp; •&thinsp; 32 kB</p>
          </div>
        </div>
        <div className="flex h-8 items-center justify-end gap-1 pr-1 pt-1.5 text-[13px] text-[#667781]">
          <time>8:41 am</time>
          <svg className="h-[14px] w-5" viewBox="0 0 20 14" fill="none" stroke="#8696a0" strokeWidth="1.700" role="img" aria-label="Delivered">
            <path d="M1 7.500L5 12L13.500 1M9.500 12L18.500 1M7.500 10.500L9.500 12" />
          </svg>
        </div>
      </article>
    </div>
  );
}

function Composer() {
  return (
    <footer className="flex h-14 shrink-0 items-start bg-[#f0f2f5] pr-[30px] pt-2.5 text-[#54656f]">
      <button type="button" aria-label="Attach" className="flex h-[58px] w-[72px] shrink-0 items-center pl-[22px] text-[#3b4a54]">
        <svg className="size-6" viewBox="0 0 24 24" fill="none" stroke="currentColor" strokeWidth="3">
          <path d="M12 1V23M1 12H23" />
        </svg>
      </button>
      <div className="flex h-14 flex-1 items-center rounded-[10px] bg-white pl-4 pr-[22px]">
        <button type="button" aria-label="Emojis and stickers">
          <svg className="size-[30px]" viewBox="0 0 24 24" fill="currentColor">
            <circle cx="8.700" cy="8.800" r="1.500" />
            <circle cx="15.500" cy="8.800" r="1.500" />
            <path fillRule="evenodd" clipRule="evenodd" d="M16.8221 19.9799C15.5379 21.2537 13.8087 21.9781 12 22H9.27273C5.25611 22 2 18.7439 2 14.7273V9.27273C2 5.25611 5.25611 2 9.27273 2H14.7273C18.7439 2 22 5.25611 22 9.27273V11.8141C22 13.7532 21.2256 15.612 19.8489 16.9776L16.8221 19.9799ZM14.7273 4H9.27273C6.36068 4 4 6.36068 4 9.27273V14.7273C4 17.6393 6.36068 20 9.27273 20H11.3331C11.722 19.8971 12.0081 19.5417 12.0058 19.1204L11.9935 16.8564C11.9933 16.8201 11.9935 16.784 11.9941 16.7479C11.0454 16.7473 10.159 16.514 9.33502 16.0479C8.51002 15.5812 7.84752 14.9479 7.34752 14.1479C7.24752 13.9479 7.25585 13.7479 7.37252 13.5479C7.48919 13.3479 7.66419 13.2479 7.89752 13.2479L13.5939 13.2479C14.4494 12.481 15.5811 12.016 16.8216 12.0208L19.0806 12.0296C19.5817 12.0315 19.9889 11.6259 19.9889 11.1248V9.07648H19.9964C19.8932 6.25535 17.5736 4 14.7273 4ZM14.0057 19.1095C14.0066 19.2605 13.9959 19.4089 13.9744 19.5537C14.5044 19.3124 14.9926 18.9776 15.4136 18.5599L18.4405 15.5576C18.8989 15.1029 19.2653 14.5726 19.5274 13.996C19.3793 14.0187 19.2275 14.0301 19.0729 14.0295L16.8138 14.0208C15.252 14.0147 13.985 15.2837 13.9935 16.8455L14.0057 19.1095Z" />
          </svg>
        </button>
        <input
          type="text"
          aria-label="Type a message"
          placeholder="Type a message"
          className="h-full min-w-0 flex-1 bg-transparent pb-0.5 pl-[18px] text-[18px] text-[#111b21] outline-none placeholder:text-[#54656f]"
        />
        <span className="size-2 rounded-full bg-[#008069]" />
      </div>
      <button type="button" aria-label="Voice message" className="ml-5 flex h-[58px] items-center">
        <svg className="size-[30px]" viewBox="0 0 24 24" fill="currentColor">
          <path d="M12 14.942c2 0 3.530-1.530 3.530-3.531V4.350C15.530 2.350 14 .819 12 .819S8.469 2.350 8.469 4.350v7.061c0 2 1.530 3.531 3.531 3.531zm6.237-3.530c0 3.531-2.942 6.002-6.237 6.002s-6.237-2.471-6.237-6.002H3.761c0 4 3.178 7.297 7.061 7.885v3.884h2.354v-3.884c3.884-.588 7.061-3.884 7.061-7.885z" />
        </svg>
      </button>
    </footer>
  );
}

export default function App() {
  return (
    <div className="h-screen overflow-hidden bg-[#d9d5d0] bg-[linear-gradient(#00a884,#00a884)] bg-[length:100%_150px] bg-no-repeat pr-[18px] pt-[15px] font-['Open_Sans','Noto_Sans',sans-serif]">
      <div className="flex h-full flex-col border-r border-[#d1d7db]">
        <Header />
        <main className="relative flex min-h-0 flex-1 bg-[#efeae2]">
          <DoodleBackground />
          <section className="relative flex flex-1 flex-col justify-end gap-[15px] pb-[25px] pr-[15px]" aria-label="Messages">
            <div className="flex justify-center">
              <span className="rounded-[9px] bg-white px-3.5 text-[15px] leading-10 text-[#54656f] shadow-[0_1px_1px_rgba(11,20,26,0.15)]">YESTERDAY</span>
            </div>
            <div className="flex justify-center">
              <button type="button" className="w-[601px] rounded-[9px] bg-[#ffeecd] px-[30px] pb-2 pt-[7px] text-center text-[15px] leading-[26px] text-[#54656f] shadow-[0_1px_1px_rgba(11,20,26,0.15)]">
                <svg className="mr-1.5 inline h-3 w-2.5 align-[-1px]" viewBox="0 0 10 12" aria-hidden="true">
                  <rect y="4.500" width="10" height="7.500" rx="1.200" fill="currentColor" />
                  <path d="M2.200 5V3.200a2.800 2.500 0 0 1 5.600 0V5" fill="none" stroke="currentColor" strokeWidth="1.300" />
                </svg>
                Messages are end-to-end encrypted. No one outside of this chat, not even WhatsApp, can read or listen to them. Click to learn more
              </button>
            </div>
            <FileMessage />
          </section>
          <div className="relative flex w-[14px] flex-col items-center justify-between py-[5px] text-[#c0bcb6]" aria-hidden="true">
            <svg className="h-1 w-1.5" viewBox="0 0 6 4" fill="currentColor"><path d="M0 4L3 0L6 4Z" /></svg>
            <svg className="h-1 w-1.5" viewBox="0 0 6 4" fill="currentColor"><path d="M0 0L3 4L6 0Z" /></svg>
          </div>
        </main>
        <Composer />
      </div>
    </div>
  );
}
